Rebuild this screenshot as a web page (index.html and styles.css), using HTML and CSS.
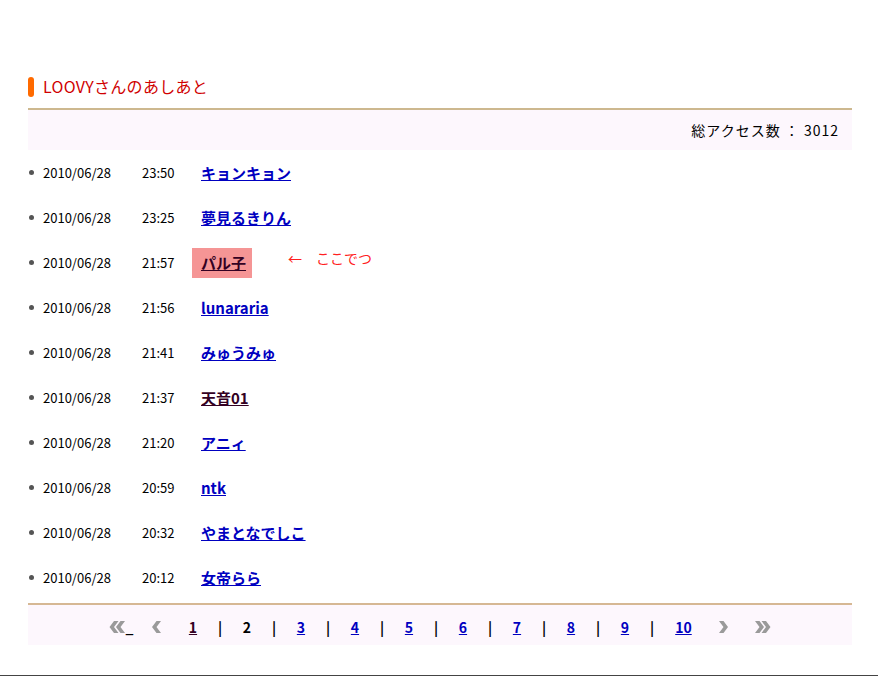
FILE: index.html
```html
<!DOCTYPE html>
<html lang="ja">
<head>
    <meta charset="UTF-8">
    <title>LOOVYさんのあしあと</title>
    <link rel="stylesheet" href="styles.css">
</head>
<body>
    <div class="container">
        <h2 class="title">LOOVYさんのあしあと</h2>
        <div class="count">総アクセス数 ： 3012</div>

        <ul class="visits">
            <li><span class="date">2010/06/28</span><span class="time">23:50</span><a href="#">キョンキョン</a></li>
            <li><span class="date">2010/06/28</span><span class="time">23:25</span><a href="#">夢見るきりん</a></li>
            <li><span class="date">2010/06/28</span><span class="time">21:57</span><a class="visited mark" href="#">パル子</a><span class="here">←　ここでつ</span></li>
            <li><span class="date">2010/06/28</span><span class="time">21:56</span><a href="#">lunararia</a></li>
            <li><span class="date">2010/06/28</span><span class="time">21:41</span><a href="#">みゅうみゅ</a></li>
            <li><span class="date">2010/06/28</span><span class="time">21:37</span><a class="visited" href="#">天音01</a></li>
            <li><span class="date">2010/06/28</span><span class="time">21:20</span><a href="#">アニィ</a></li>
            <li><span class="date">2010/06/28</span><span class="time">20:59</span><a href="#">ntk</a></li>
            <li><span class="date">2010/06/28</span><span class="time">20:32</span><a href="#">やまとなでしこ</a></li>
            <li><span class="date">2010/06/28</span><span class="time">20:12</span><a href="#">女帝らら</a></li>
        </ul>

        <div class="pager">
            <span class="arrow first">
                <svg width="17" height="12" viewBox="0 0 17 12"><path d="M5 0h4.5L5 6l4.5 6H5L0.5 6z M11.5 0H16l-4.5 6 4.5 6h-4.5L7 6z" fill="#9a9a9a"/></svg>_
            </span>
            <span class="arrow prev">
                <svg width="11" height="12" viewBox="0 0 11 12"><path d="M5.5 0H10L5.5 6l4.5 6H5.5L1 6z" fill="#9a9a9a"/></svg>
            </span>
            <a class="visited" href="#">1</a><span class="sep">|</span>
            <span class="current">2</span><span class="sep">|</span>
            <a href="#">3</a><span class="sep">|</span>
            <a href="#">4</a><span class="sep">|</span>
            <a href="#">5</a><span class="sep">|</span>
            <a href="#">6</a><span class="sep">|</span>
            <a href="#">7</a><span class="sep">|</span>
            <a href="#">8</a><span class="sep">|</span>
            <a href="#">9</a><span class="sep">|</span>
            <a class="ten" href="#">10</a>
            <span class="arrow next">
                <svg width="11" height="12" viewBox="0 0 11 12"><path d="M1 0h4.5L10 6l-4.5 6H1l4.5-6z" fill="#9a9a9a"/></svg>
            </span>
            <span class="arrow last">
                <svg width="17" height="12" viewBox="0 0 17 12"><path d="M1 0h4.5L10 6l-4.5 6H1l4.5-6z M7.5 0H12l4.5 6-4.5 6H7.5L12 6z" fill="#9a9a9a"/></svg>
            </span>
        </div>
    </div>
    <div class="page-end"></div>
</body>
</html>
```

FILE: styles.css
```css
body {
    margin: 0;
    font-family: "Noto Sans CJK JP", "DejaVu Sans", sans-serif;
    font-size: 13px;
    color: #000;
    background-color: #fff;
}

.container {
    width: 824px;
    margin-left: 28px;
    padding-top: 72px;
}

.title {
    margin: 0;
    height: 28px;
    line-height: 28px;
    padding-left: 15px;
    position: relative;
    font-size: 16px;
    font-weight: normal;
    letter-spacing: 0.3px;
    color: #d00000;
    border-bottom: 2px solid #cdb88f;
    padding-bottom: 8px;
}

.title::before {
    content: "";
    position: absolute;
    left: 0;
    top: 5px;
    width: 6px;
    height: 20px;
    border-radius: 3px;
    background-color: #ff6a00;
}

.count {
    height: 40px;
    line-height: 40px;
    text-align: right;
    padding-right: 13px;
    background-color: #fdf7fd;
    font-size: 14px;
    letter-spacing: 1px;
}

.visits {
    list-style-type: none;
    margin: 0;
    padding: 0 0 3px 0;
    border-bottom: 2px solid #d6b894;
}

.visits li {
    display: flex;
    align-items: center;
    height: 45px;
}

.visits li::before {
    content: "";
    width: 5px;
    height: 5px;
    border-radius: 50%;
    background-color: #555;
    margin-left: 1px;
    margin-right: 9px;
}

.date { width: 99px; }
.time { width: 59px; }

a {
    color: #0000c0;
    font-weight: bold;
}

.visits a { font-size: 15px; }

a.visited { color: #330022; }

.visits a.mark {
    background-color: #f59595;
    padding: 0 6px 0 9px;
    height: 30px;
    line-height: 30px;
    margin-left: -9px;
}

.here {
    margin-left: 36px;
    margin-top: -10px;
    font-size: 14px;
    color: #ff2020;
}

.pager {
    height: 37px;
    padding-top: 3px;
    display: flex;
    align-items: center;
    justify-content: center;
    gap: 18px;
    background-color: #fdf7fd;
    font-size: 14px;
    font-weight: bold;
}

.pager a, .pager .current, .pager .sep {
    width: 9px;
    text-align: center;
}

.pager a.ten { width: 18px; }

.pager .arrow {
    display: flex;
    align-items: center;
    color: #000;
}

.pager .prev { margin-right: 8px; }
.pager .next { margin-left: 8px; }
.pager .last { margin-left: 7px; }

.pager .current { font-weight: bold; }

.page-end {
    margin-top: 30px;
    border-top: 2px solid #444;
}
```
